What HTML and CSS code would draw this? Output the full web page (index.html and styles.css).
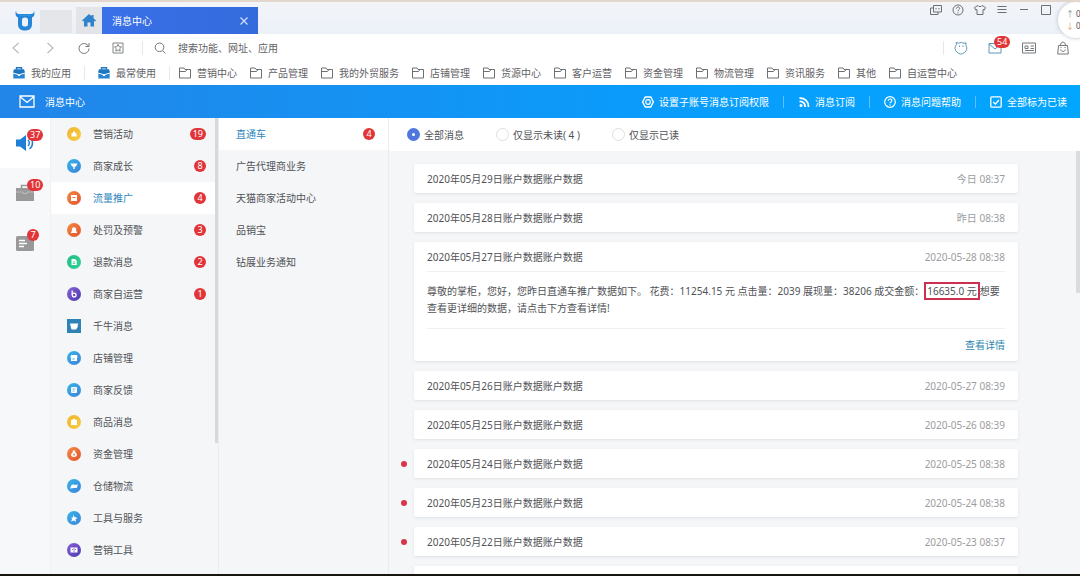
FILE: index.html
```html
<!DOCTYPE html>
<html lang="zh-CN">
<head>
<meta charset="utf-8">
<title>消息中心</title>
<meta name="viewport" content="width=device-width, initial-scale=1">
<link rel="stylesheet" href="styles.css">
</head>
<body>
<svg class="sprite" aria-hidden="true">
  <defs>
    <symbol id="folder" viewBox="0 0 12 12"><path d="M.5 11V1h4.500l1 1.500h5.500V11z M.5 4.500h6l1.500-2" fill="none" stroke="currentColor" stroke-width=".9"/></symbol>
    <symbol id="case" viewBox="0 0 12 12"><path d="M3.500 2.500V.8h5v1.700" fill="none" stroke="#1c76c0" stroke-width="1.400"/><path d="M1 2.200h10l1 3.200-6 1.800L0 5.400z" fill="#1c76c0"/><path d="M.3 6.500 5 8v1h2V8l4.700-1.500V11.500H.3z" fill="#2a86d0"/></symbol>
  </defs>
</svg>
<div class="app">
  <header class="tabs">
    <svg class="logo" viewBox="0 0 20 21"><path d="M1 .5C1 3 2 4 4 4h12c2 0 3-1 3-3.500 1 3.500.5 6-2 7v6.500c0 4.500-2.500 6.500-7 6.500S3 18.500 3 14V7.500C.5 6.500 0 4 1 .5z" fill="#2585d6"/><rect x="7" y="7.500" width="6" height="9" rx="2.500" fill="#eef2f8"/><path d="M4 4.500h12V6H4z" fill="#2f93e0"/></svg>
    <span class="account"></span>
    <button class="home" aria-label="首页"><svg width="14" height="13" viewBox="0 0 14 13"><path d="M7 0 0 6.500 1 7.500 2 6.700V12.500h3.500V8.500h3v4H12V6.700l1 .8 1-1-2.500-2.300V1H9.500v1.300z" fill="#2f83cc"/></svg></button>
    <div class="tab"><span>消息中心</span><button aria-label="关闭"><svg width="8" height="8" viewBox="0 0 8 8"><path d="M.5.5l7 7M7.500.5l-7 7" stroke="#d5e2ff" stroke-width="1.100"/></svg></button></div>
    <div class="window-tools">
      <button aria-label="多窗口"><svg viewBox="0 0 12 12"><path d="M3.500 1.500h8v6.500h-8z M3.500 4h-3v6.500h7.500V8 M6 4v1.500M9 4v1.500" fill="none" stroke="currentColor"/></svg></button>
      <button aria-label="帮助"><svg viewBox="0 0 12 12"><circle cx="6" cy="6" r="5" fill="none" stroke="currentColor"/><path d="M4.300 4.700C4.300 2.500 7.700 2.500 7.700 4.500 7.700 5.800 6 5.700 6 7.200M6 8.200v1.200" fill="none" stroke="currentColor"/></svg></button>
      <button aria-label="皮肤"><svg viewBox="0 0 12 12"><path d="M4 1.500C4.500 3 7.500 3 8 1.500L11.500 3.500 10.300 6 9 5.500v5H3v-5L1.700 6 .5 3.500z" fill="none" stroke="currentColor"/></svg></button>
      <button aria-label="菜单"><svg viewBox="0 0 12 12"><path d="M1.500 2.500h9M1.500 5.500h9M1.500 8.500h9" stroke="currentColor"/></svg></button>
      <button aria-label="最小化"><svg viewBox="0 0 12 12"><path d="M2 5.500h8" stroke="currentColor"/></svg></button>
      <button aria-label="最大化"><svg viewBox="0 0 12 12"><path d="M1.500 1.500h9v9h-9z" fill="none" stroke="currentColor"/></svg></button>
    </div>
  </header>

  <div class="toolbar">
    <div class="nav-buttons">
      <button class="dim" aria-label="后退"><svg viewBox="0 0 12 12"><path d="M8.500 1 3 6l5.500 5" fill="none" stroke="currentColor" stroke-width="1.200"/></svg></button>
      <button class="dim" aria-label="前进"><svg viewBox="0 0 12 12"><path d="M3.500 1 9 6l-5.500 5" fill="none" stroke="currentColor" stroke-width="1.200"/></svg></button>
      <button aria-label="刷新"><svg viewBox="0 0 12 12"><path d="M10.500 4.300A5 5 0 1 0 11 6.500M11 1v3.500H7.500" fill="none" stroke="currentColor"/></svg></button>
      <button aria-label="收藏"><svg viewBox="0 0 12 12"><path d="M1 1h10v10H1z M6 2.500l1.100 2.200 2.400.3-1.800 1.700.5 2.500L6 8 3.800 9.200l.5-2.500L2.500 5l2.400-.3z" fill="none" stroke="currentColor" stroke-width=".9"/></svg></button>
    </div>
    <span class="rule"></span>
    <label class="search"><svg viewBox="0 0 12 12"><circle cx="5.500" cy="5.300" r="4.300" fill="none" stroke="currentColor"/><path d="M8.500 8.500l3 3" stroke="currentColor"/></svg><input type="text" placeholder="搜索功能、网址、应用" aria-label="搜索功能、网址、应用"></label>
    <span class="rule"></span>
    <div class="tray">
      <button class="tint" aria-label="旺旺"><svg viewBox="0 0 14 14"><path d="M2.500 3.500 2 1.500l2.500.6a6 6 0 0 1 5.500.2L12 1.800l-.1 2.500A5.700 5.700 0 1 1 2.500 3.500z" fill="none" stroke="currentColor"/><path d="M5.500 4.500V6M9 4.500V6" stroke="currentColor" fill="none"/></svg></button>
      <button class="tint" aria-label="邮件"><svg viewBox="0 0 14 14"><path d="M1 2.500h12v9.500H1z M1 3l6 5 6-5" fill="none" stroke="currentColor"/></svg><span class="badge">54</span></button>
      <button aria-label="名片"><svg viewBox="0 0 14 14"><path d="M.5 2h13v10H.5z M3 5h3v2.500H3z M8.500 5H12M8.500 7.500H12M3 9.500h9" fill="none" stroke="currentColor"/></svg></button>
      <button aria-label="服务市场"><svg viewBox="0 0 14 14"><path d="M2.500 4.500h9l.8 8.500H1.700z M4.500 4.500C4.500 0 9.500 0 9.500 4.500M4.500 8.500c.5 2.500 4.500 2.500 5 0M5 6v1M9 6v1" fill="none" stroke="currentColor"/></svg></button>
    </div>
  </div>

  <nav class="bookmarks" aria-label="书签">
    <a href="#"><svg><use href="#case"/></svg>我的应用</a><span class="rule"></span>
    <a href="#"><svg><use href="#case"/></svg>最常使用</a><span class="rule"></span>
    <div class="folders">
      <a href="#"><svg><use href="#folder"/></svg>营销中心</a>
      <a href="#"><svg><use href="#folder"/></svg>产品管理</a>
      <a href="#"><svg><use href="#folder"/></svg>我的外贸服务</a>
      <a href="#"><svg><use href="#folder"/></svg>店铺管理</a>
      <a href="#"><svg><use href="#folder"/></svg>货源中心</a>
      <a href="#"><svg><use href="#folder"/></svg>客户运营</a>
      <a href="#"><svg><use href="#folder"/></svg>资金管理</a>
      <a href="#"><svg><use href="#folder"/></svg>物流管理</a>
      <a href="#"><svg><use href="#folder"/></svg>资讯服务</a>
      <a href="#"><svg><use href="#folder"/></svg>其他</a>
      <a href="#"><svg><use href="#folder"/></svg>自运营中心</a>
    </div>
  </nav>

  <div class="banner">
    <h1><svg width="16" height="13" viewBox="0 0 16 13"><path d="M1 1h14v11H1z M1.500 2 8 7.500 14.500 2" fill="none" stroke="#fff" stroke-width="1.300"/></svg>消息中心</h1>
    <div class="actions">
      <button><svg viewBox="0 0 12 12"><path d="M3.300 1h5.400L11.300 6 8.700 11H3.300L.7 6z" fill="none" stroke="#fff" stroke-width="1.400"/><circle cx="6" cy="6" r="2.300" fill="none" stroke="#fff" stroke-width="1.200"/></svg>设置子账号消息订阅权限</button>
      <button><svg viewBox="0 0 12 12"><circle cx="3" cy="9.500" r="1.500" fill="#fff"/><path d="M1.500 5.300c3.500 0 5.700 2.200 5.700 5.700M1.500 2c5.500 0 9 3.500 9 9" fill="none" stroke="#fff" stroke-width="1.800"/></svg>消息订阅</button>
      <button><svg viewBox="0 0 12 12"><circle cx="6" cy="6" r="5.300" fill="none" stroke="#fff" stroke-width="1.200"/><path d="M4.200 4.800C4.200 2.400 7.800 2.400 7.800 4.600 7.800 6 6 5.800 6 7.300M6 8.200v1.300" fill="none" stroke="#fff" stroke-width="1.200"/></svg>消息问题帮助</button>
      <button><svg viewBox="0 0 12 12"><rect x=".8" y=".8" width="10.400" height="10.400" rx="1" fill="none" stroke="#fff" stroke-width="1.300"/><path d="M3.200 6l2.200 2 3.500-4" fill="none" stroke="#fff" stroke-width="1.300"/></svg>全部标为已读</button>
    </div>
  </div>

  <div class="body">
    <nav class="rail" aria-label="消息类型">
      <button class="on" aria-label="系统消息"><svg viewBox="0 0 20 18"><path d="M1 5.500h4L11 1v16l-6-4.500H1z" fill="#1f7fd6"/><path d="M13 6c1.700 1.500 1.700 4.500 0 6M14.500 3c4 3 4 9 0 12" fill="none" stroke="#1f7fd6" stroke-width="1.500"/></svg><span class="badge">37</span></button>
      <button aria-label="任务"><svg viewBox="0 0 20 18"><path d="M6.500 4V1.500h7V4" fill="none" stroke="#999" stroke-width="1.500"/><path d="M1 4h18v13H1z" fill="#999"/><path d="M1 8h7v1.500h4V8h7" fill="none" stroke="#c4c4c4" stroke-width=".8"/></svg><span class="badge">10</span></button>
      <button aria-label="通知"><svg viewBox="0 0 20 18"><rect x="1" y="2" width="18" height="15" rx="1.500" fill="#999"/><path d="M4 6.500h6M4 9.500h8M4 12.500h5" stroke="#fff" stroke-width="1.300"/></svg><span class="badge">7</span></button>
    </nav>

    <nav class="menu" aria-label="消息分类">
      <a href="#"><svg class="yellow" viewBox="0 0 14 14"><path d="M4.500 6h5v3.500h-5z M6 4.500h2V6H6z" fill="#fff"/></svg><span>营销活动</span><b class="badge">19</b></a>
      <a href="#"><svg class="blue" viewBox="0 0 14 14"><path d="M3.500 4.500h7L9 7.500H7.700V10H6.300V7.500H5z" fill="#fff"/></svg><span>商家成长</span><b class="badge">8</b></a>
      <a href="#" class="on"><svg class="orange" viewBox="0 0 14 14"><path d="M4 4h6v6H4z" fill="#fff"/><path d="M5.500 6.500h3" stroke="#ee6d35"/></svg><span>流量推广</span><b class="badge">4</b></a>
      <a href="#"><svg class="orange" viewBox="0 0 14 14"><path d="M4 10V9l.8-.7V6.500a2.200 2.200 0 0 1 4.400 0v1.800L10 9v1z" fill="#fff"/></svg><span>处罚及预警</span><b class="badge">3</b></a>
      <a href="#"><svg class="green" viewBox="0 0 14 14"><path d="M4.500 4h3.500l1.800 2v4H4.500z" fill="#fff"/><path d="M5.800 7h2.500M5.800 8.500h2.500" stroke="#27c58b" stroke-width=".7"/></svg><span>退款消息</span><b class="badge">2</b></a>
      <a href="#"><svg class="purple" viewBox="0 0 14 14"><circle cx="7.200" cy="8" r="1.900" fill="none" stroke="#fff" stroke-width="1.300"/><path d="M5.200 3.500V8" stroke="#fff" stroke-width="1.300"/></svg><span>商家自运营</span><b class="badge">1</b></a>
      <a href="#"><svg class="square" viewBox="0 0 14 14"><path d="M3 4.500h8.500L10.500 6.500l.5 1-2 3H4.500L3.500 7z" fill="#fff"/></svg><span>千牛消息</span></a>
      <a href="#"><svg class="blue" viewBox="0 0 14 14"><path d="M4 4h6l.7 2.500H10V10H4V6.500h-.7z" fill="#fff"/><path d="M5.500 8h2" stroke="#3398de"/></svg><span>店铺管理</span></a>
      <a href="#"><svg class="blue" viewBox="0 0 14 14"><rect x="4" y="4" width="6" height="6" rx="1" fill="#fff"/><path d="M5.500 6h3M5.500 8h2" stroke="#3398de" stroke-width=".7"/></svg><span>商家反馈</span></a>
      <a href="#"><svg class="yellow" viewBox="0 0 14 14"><path d="M4 5h6v5H4z M5.500 4h3v1h-3z" fill="#fff"/></svg><span>商品消息</span></a>
      <a href="#"><svg class="orange" viewBox="0 0 14 14"><path d="M5.500 3.500h3L8 5c3 2 2.500 5-1 5s-4-3-1-5z" fill="#fff"/><path d="M6 7.500h2M7 6.500v2.500" stroke="#ee6d35" stroke-width=".7"/></svg><span>资金管理</span></a>
      <a href="#"><svg class="blue" viewBox="0 0 14 14"><path d="M3 9.500 4.500 6l2-.7 1 .7 3.500-.5L9.700 9 7 9z" fill="#fff"/></svg><span>仓储物流</span></a>
      <a href="#"><svg class="blue" viewBox="0 0 14 14"><path d="M6.500 3.500l1 2.500 3 1-2 1.200L9 11 7 9.500 4 10.500 5.200 8 4 6.500h2z" fill="#fff"/></svg><span>工具与服务</span></a>
      <a href="#"><svg class="purple" viewBox="0 0 14 14"><path d="M3.500 4.500h7v5h-7z" fill="#fff"/><path d="M7 5v4M5 6.500h1M8 6.500h1" stroke="#6a4dc0" stroke-width=".7"/></svg><span>营销工具</span></a>
    </nav>

    <nav class="submenu" aria-label="流量推广">
      <a href="#" class="on"><span>直通车</span><b class="badge">4</b></a>
      <a href="#">广告代理商业务</a>
      <a href="#">天猫商家活动中心</a>
      <a href="#">品销宝</a>
      <a href="#">钻展业务通知</a>
    </nav>

    <main class="content">
      <form class="filters">
        <label><input type="radio" name="show" checked>全部消息</label>
        <label><input type="radio" name="show">仅显示未读( 4 )</label>
        <label><input type="radio" name="show">仅显示已读</label>
      </form>
      <div class="messages">
        <article><header><h2>2020年05月29日账户数据账户数据</h2><time>今日 08:37</time></header></article>
        <article><header><h2>2020年05月28日账户数据账户数据</h2><time>昨日 08:38</time></header></article>
        <article>
          <header><h2>2020年05月27日账户数据账户数据</h2><time>2020-05-28 08:38</time></header>
          <p>尊敬的掌柜，您好，您昨日直通车推广数据如下。 花费：11254.15 元 点击量：2039 展现量：38206 成交金额：<mark>16635.0 元</mark>想要查看更详细的数据，请点击下方查看详情!</p>
          <footer><a href="#">查看详情</a></footer>
        </article>
        <article><header><h2>2020年05月26日账户数据账户数据</h2><time>2020-05-27 08:39</time></header></article>
        <article><header><h2>2020年05月25日账户数据账户数据</h2><time>2020-05-26 08:39</time></header></article>
        <article class="unread"><header><h2>2020年05月24日账户数据账户数据</h2><time>2020-05-25 08:38</time></header></article>
        <article class="unread"><header><h2>2020年05月23日账户数据账户数据</h2><time>2020-05-24 08:38</time></header></article>
        <article class="unread"><header><h2>2020年05月22日账户数据账户数据</h2><time>2020-05-23 08:37</time></header></article>
        <article class="blank"></article>
      </div>
    </main>
  </div>
  <aside class="speed"><span><i class="up">↑</i>0</span><span><i class="down">↓</i>0</span></aside>
</div>
</body>
</html>
```
FILE: styles.css
```css
* { box-sizing: border-box; }

body {
  margin: 0;
  font: 10px/16px "Noto Sans", "Noto Sans CJK SC", sans-serif;
  color: #505256;
}

a { color: inherit; text-decoration: none; }
h1, h2, p { margin: 0; font-size: 10px; font-weight: 400; }

button {
  padding: 0;
  border: 0;
  background: none;
  font: inherit;
  color: inherit;
}

svg { display: block; flex: none; }
.sprite { position: absolute; width: 0; height: 0; }

.app {
  position: relative;
  display: flex;
  flex-direction: column;
  height: 100vh;
  overflow: hidden;
  background: #fff;
  border-top: 2px solid #e3d6cc;
  border-bottom: 2px solid #17150f;
}

.rule { flex: none; width: 1px; height: 14px; background: #e8e8ea; }

.badge {
  min-width: 12px;
  height: 12px;
  padding: 0 3px;
  border-radius: 6px;
  background: #e23539;
  color: #fff;
  font-size: 9px;
  font-weight: 400;
  line-height: 12px;
  text-align: center;
}

/* Tab strip */
.tabs {
  flex: none;
  display: flex;
  align-items: flex-end;
  height: 32px;
  padding-left: 15px;
  background: linear-gradient(#f2f4f8, #ecf1f8);
}
.logo { width: 20px; height: 21px; margin-bottom: 3px; }
.account { width: 32px; height: 23px; margin: 0 4px 1px 5px; background: #e5e6ea; }
.home {
  display: grid;
  place-items: center;
  width: 26px;
  height: 27px;
  background: #e3e4e8;
}
.tab {
  display: flex;
  align-items: center;
  justify-content: space-between;
  width: 156px;
  height: 27px;
  padding: 0 10px;
  background: linear-gradient(90deg, #3a70e8, #346bdc);
  color: #fff;
}
.window-tools {
  display: flex;
  gap: 10px;
  align-self: flex-start;
  margin: 2px 28px 0 auto;
  color: #6c7077;
}
.window-tools svg { width: 12px; height: 12px; }

/* Address bar */
.toolbar {
  flex: none;
  display: flex;
  align-items: center;
  height: 27px;
  padding: 0 10px;
  color: #75787c;
}
.nav-buttons { display: flex; gap: 22px; margin-right: 18px; }
.nav-buttons svg, .search svg { width: 12px; height: 12px; }
.dim { color: #b9bbbe; }
.search { flex: 1; display: flex; align-items: center; gap: 12px; padding-left: 11px; }
.search input {
  flex: 1;
  min-width: 0;
  padding: 0;
  border: 0;
  outline: 0;
  background: none;
  font: inherit;
}
.search input::placeholder { color: #5f6164; opacity: 1; }
.tray { display: flex; gap: 20px; padding-left: 10px; }
.tray button { position: relative; }
.tray svg { width: 14px; height: 14px; }
.tray .badge { position: absolute; left: 6px; top: -5px; }
.tint { color: #5f97b8; }

/* Bookmarks */
.bookmarks {
  flex: none;
  display: flex;
  align-items: center;
  gap: 13px;
  height: 24px;
  padding-left: 13px;
  color: #5f6165;
}
.bookmarks a { display: flex; align-items: center; gap: 6px; white-space: nowrap; }
.bookmarks svg { width: 12px; height: 12px; }
.folders { display: flex; gap: 13px; margin-left: -4px; }

/* Page banner */
.banner {
  flex: none;
  display: flex;
  align-items: center;
  justify-content: space-between;
  height: 33px;
  padding: 0 13px 0 19px;
  background: linear-gradient(90deg, #2385e8, #0a9cfb 60%, #02a6ff);
  color: #fff;
}
.banner h1 { display: flex; align-items: center; gap: 10px; }
.actions { display: flex; }
.actions button { display: flex; align-items: center; gap: 5px; }
.actions svg { width: 12px; height: 12px; }
.actions button + button::before {
  content: "";
  width: 1px;
  height: 12px;
  margin: 0 9px 0 14px;
  background: #5cc0ff;
}

.body { flex: 1; display: flex; min-height: 0; background: #f4f6f8; }

/* Icon rail */
.rail { flex: none; width: 50px; background: #f6f8fa; }
.rail button {
  position: relative;
  display: grid;
  place-items: center;
  width: 50px;
  height: 50px;
}
.rail svg { width: 20px; height: 18px; }
.rail .on { background: #fff; }
.rail .badge { position: absolute; left: 27px; top: 11px; }

/* Category list */
.menu {
  position: relative;
  flex: none;
  width: 169px;
  border-left: 1px solid #eff1f3;
  border-right: 1px solid #eaecee;
  overflow: hidden;
}
.menu::after {
  content: "";
  position: absolute;
  top: 0;
  right: 0;
  width: 3px;
  height: 325px;
  background: #d6d9dc;
}
.menu a {
  display: flex;
  align-items: center;
  gap: 12px;
  height: 32px;
  padding: 0 12px 0 16px;
}
.menu a .badge { margin-left: auto; }
.menu .on, .submenu .on { background: #fff; color: #2f86bd; }
.menu svg { width: 14px; height: 14px; border-radius: 50%; }
.yellow { background: linear-gradient(135deg, #f0b62e, #f5cd45); }
.blue { background: linear-gradient(135deg, #35b5ea, #3f82d8); }
.orange { background: linear-gradient(135deg, #f58a43, #e2542c); }
.green { background: linear-gradient(135deg, #1fbd83, #35d29a); }
.purple { background: linear-gradient(135deg, #8a62d6, #4a3aae); }
.menu .square { border-radius: 0; background: #2f82b5; }

/* Topic list */
.submenu { flex: none; width: 170px; border-right: 1px solid #eaecef; }
.submenu a {
  display: flex;
  align-items: center;
  justify-content: space-between;
  height: 32px;
  padding: 0 13px 0 17px;
}

/* Messages */
.content {
  position: relative;
  flex: 1;
  display: flex;
  flex-direction: column;
  min-width: 0;
}
.content::after {
  content: "";
  position: absolute;
  top: 33px;
  right: 0;
  width: 4px;
  height: 142px;
  background: #dadcde;
}
.filters {
  flex: none;
  display: flex;
  align-items: center;
  gap: 32px;
  height: 33px;
  padding-left: 18px;
  background: #fff;
}
.filters label { display: flex; align-items: center; gap: 4px; }
.filters input {
  appearance: none;
  width: 13px;
  height: 13px;
  margin: 0;
  border: 1px solid #dcdee1;
  border-radius: 50%;
  background: #fff;
}
.filters input:checked { border: 5px solid #4f77dd; }

.messages {
  flex: 1;
  display: flex;
  flex-direction: column;
  gap: 10px;
  min-height: 0;
  padding: 13px 62px 0 25px;
  overflow: hidden;
}
article {
  position: relative;
  flex: none;
  padding: 0 13px;
  border-radius: 2px;
  background: #fff;
  box-shadow: 0 1px 3px #dfe2e5;
}
article header { display: flex; align-items: center; justify-content: space-between; height: 29px; }
time { color: #9b9da0; }
article p {
  padding: 11px 0;
  border: solid #eff0f1;
  border-width: 1px 0;
  line-height: 17px;
}
mark { padding: 0 1px; border: 2px solid #cc2f50; background: none; color: inherit; }
article footer { display: flex; align-items: center; justify-content: flex-end; height: 32px; color: #2b86ad; }
.unread::before {
  content: "";
  position: absolute;
  left: -13px;
  top: 12px;
  width: 6px;
  height: 6px;
  border-radius: 50%;
  background: #d8344a;
}
.blank { height: 29px; }

/* Floating network meter */
.speed {
  position: absolute;
  top: 0;
  right: -14px;
  display: flex;
  flex-direction: column;
  justify-content: center;
  width: 36px;
  height: 36px;
  padding-left: 8px;
  border-radius: 50%;
  background: #fff;
  box-shadow: 0 0 4px #b9bdc4;
  font-size: 8px;
  line-height: 12px;
}
.speed span { display: flex; gap: 2px; }
.speed i { font-style: normal; }
.up { color: #8a8c90; }
.down { color: #e0a060; }
```
